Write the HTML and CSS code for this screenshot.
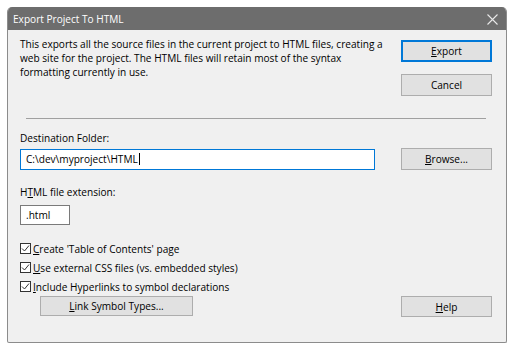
FILE: index.html
```html
<!DOCTYPE html>
<html>
<head>
<meta charset="utf-8">
<link rel="stylesheet" href="styles.css">
</head>
<body>
<div class="window">
  <div class="titlebar">
    <span class="title">Export Project To HTML</span>
    <svg class="close" width="11" height="11" viewBox="0 0 11 11"><path d="M0.5 0.5 L10.5 10.5 M10.5 0.5 L0.5 10.5" stroke="#e8e8e8" stroke-width="1.1" fill="none"/></svg>
  </div>
  <div class="body">
    <div class="top">
      <p class="desc">This exports all the source files in the current project to HTML files, creating a web site for the project. The HTML files will retain most of the syntax formatting currently in use.</p>
      <div class="btncol">
        <button class="btn default"><u>E</u>xport</button>
        <button class="btn">Cancel</button>
      </div>
    </div>
    <div class="sep"></div>
    <div class="label">Destination Folder:</div>
    <div class="row">
      <div class="input focus">C:\dev\myproject\HTML<span class="caret"></span></div>
      <button class="btn"><u>B</u>rowse...</button>
    </div>
    <div class="label label2">H<u>T</u>ML file extension:</div>
    <div class="input ext">.html</div>
    <div class="checks">
      <div class="check"><span class="box"><svg width="9" height="9" viewBox="0 0 9 9"><path d="M1 4.5 L3.5 7 L8 1.5" stroke="#333" stroke-width="1" fill="none"/></svg></span><span><u>C</u>reate 'Table of Contents' page</span></div>
      <div class="check"><span class="box"><svg width="9" height="9" viewBox="0 0 9 9"><path d="M1 4.5 L3.5 7 L8 1.5" stroke="#333" stroke-width="1" fill="none"/></svg></span><span><u>U</u>se external CSS files (vs. embedded styles)</span></div>
      <div class="check"><span class="box"><svg width="9" height="9" viewBox="0 0 9 9"><path d="M1 4.5 L3.5 7 L8 1.5" stroke="#333" stroke-width="1" fill="none"/></svg></span><span><u>I</u>nclude Hyperlinks to symbol declarations</span></div>
    </div>
    <div class="bottom">
      <button class="btn link"><u>L</u>ink Symbol Types...</button>
      <button class="btn"><u>H</u>elp</button>
    </div>
  </div>
</div>
</body>
</html>
```

FILE: styles.css
```css
* { box-sizing: border-box; }
html, body { margin: 0; padding: 0; background: #ffffff; }
body { font-family: "Open Sans", "Noto Sans", sans-serif; font-size: 10.1px; color: #000; }

.window {
  margin: 7px 0 0 7px;
  width: 500px;
  height: 336px;
  border: 1px solid #8c8c8c;
  border-top: none;
  border-radius: 5px 5px 2px 2px;
  background: #f0f0f0;
  overflow: hidden;
  display: flex;
  flex-direction: column;
}

.titlebar {
  height: 23px;
  background: #6d6d6d;
  color: #ffffff;
  display: flex;
  align-items: center;
  justify-content: space-between;
  padding: 0 8px 0 5px;
  font-size: 10.1px;
}
.close { margin-top: 1px; }

.body {
  flex: 1;
  padding: 7px 14px 0 12px;
  display: flex;
  flex-direction: column;
}

.top {
  display: flex;
  justify-content: space-between;
  height: 81px;
}
.desc {
  margin: 0;
  width: 372px;
  line-height: 14px;
}
.btncol {
  display: flex;
  flex-direction: column;
  gap: 12px;
  padding-top: 3px;
}

.btn {
  font: inherit;
  width: 91px;
  height: 22px;
  background: #e1e1e1;
  border: 1px solid #adadad;
  color: #000;
  padding: 0;
  text-align: center;
}
.btn.default {
  border: 1px solid #0078d7;
  box-shadow: inset 0 0 0 1px #0078d7;
}

.sep {
  height: 1px;
  background: #a0a0a0;
  margin: 0 6px;
}

.label {
  line-height: 14px;
  margin-top: 12px;
}
.label2 { margin-top: 15px; }

.row {
  display: flex;
  justify-content: space-between;
  align-items: center;
  margin-top: 3px;
}
.input {
  height: 21px;
  background: #fff;
  border: 1px solid #7a7a7a;
  padding: 0 5px;
  display: flex;
  align-items: center;
}
.input.focus {
  width: 355px;
  border-color: #0078d7;
}
.caret {
  display: inline-block;
  width: 1px;
  height: 12px;
  background: #000;
  margin-left: 1px;
}
.input.ext {
  width: 50px;
  height: 20px;
  margin-top: 6px;
}

.checks {
  margin-top: 14px;
  display: flex;
  flex-direction: column;
}
.check {
  height: 19px;
  display: flex;
  align-items: center;
  gap: 2px;
}
.box {
  width: 11px;
  height: 11px;
  border: 1px solid #333;
  background: #fff;
  display: flex;
  align-items: center;
  justify-content: center;
}

.bottom {
  display: flex;
  justify-content: space-between;
  padding-left: 20px;
}
.btn.link { width: 153px; height: 20px; }
.bottom .btn:last-child { height: 21px; }
```
